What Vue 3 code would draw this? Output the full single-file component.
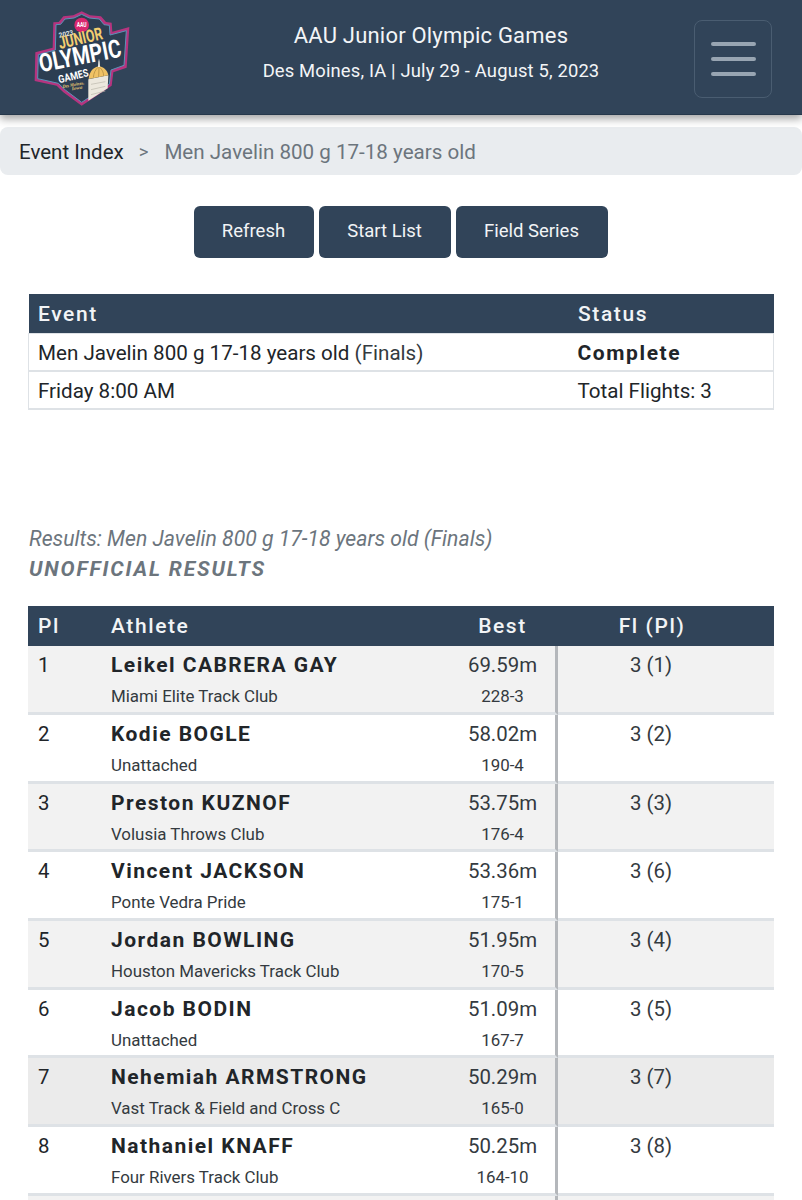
<script setup>
const rows = [
  { pl: 1, name: 'Leikel CABRERA GAY', team: 'Miami Elite Track Club', m: '69.59m', ft: '228-3', fl: '3 (1)' },
  { pl: 2, name: 'Kodie BOGLE', team: 'Unattached', m: '58.02m', ft: '190-4', fl: '3 (2)' },
  { pl: 3, name: 'Preston KUZNOF', team: 'Volusia Throws Club', m: '53.75m', ft: '176-4', fl: '3 (3)' },
  { pl: 4, name: 'Vincent JACKSON', team: 'Ponte Vedra Pride', m: '53.36m', ft: '175-1', fl: '3 (6)' },
  { pl: 5, name: 'Jordan BOWLING', team: 'Houston Mavericks Track Club', m: '51.95m', ft: '170-5', fl: '3 (4)' },
  { pl: 6, name: 'Jacob BODIN', team: 'Unattached', m: '51.09m', ft: '167-7', fl: '3 (5)' },
  { pl: 7, name: 'Nehemiah ARMSTRONG', team: 'Vast Track & Field and Cross C', m: '50.29m', ft: '165-0', fl: '3 (7)', hover: true },
  { pl: 8, name: 'Nathaniel KNAFF', team: 'Four Rivers Track Club', m: '50.25m', ft: '164-10', fl: '3 (8)' },
]
</script>

<template>
  <div class="page">
    <header class="top">
      <svg class="logo" viewBox="0 0 312 306" aria-label="2023 AAU Junior Olympic Games logo">
        <path d="M70 46 L86 45 L100 28 L130 25 L155 13 L180 25 L213 28 L228 45 L245 47 L247 74 L298 60 L290 182 L250 196 L245 236 L155 296 L100 256 L80 236 L14 222 L16 136 L68 122 Z" fill="#b5347f"/>
        <path d="M78 53 L92 52 L105 36 L132 33 L155 22 L178 33 L208 36 L222 53 L238 55 L240 84 L289 71 L282 175 L243 189 L238 231 L155 286 L106 249 L85 229 L23 215 L25 143 L76 129 Z" fill="#2c3e52" stroke="#5a93b8" stroke-width="3"/>
        <circle cx="155" cy="54" r="22" fill="#d9276f"/>
        <text x="155" y="61" text-anchor="middle" class="l-aau" textLength="30" lengthAdjust="spacingAndGlyphs">AAU</text>
        <text x="88" y="92" class="l-yr" transform="rotate(-11 88 92)" textLength="44" lengthAdjust="spacingAndGlyphs">2023</text>
        <text x="90" y="126" class="l-jr" transform="rotate(-13 90 126)" textLength="134" lengthAdjust="spacingAndGlyphs">JUNIOR</text>
        <text x="32" y="196" class="l-ol" transform="rotate(-11 32 196)" textLength="250" lengthAdjust="spacingAndGlyphs">OLYMPIC</text>
        <text x="88" y="229" class="l-ga" transform="rotate(-14 88 229)" textLength="92" lengthAdjust="spacingAndGlyphs">GAMES</text>
        <text x="98" y="243" class="l-dm" transform="rotate(-10 98 243)" textLength="66" lengthAdjust="spacingAndGlyphs">Des Moines,</text>
        <text x="126" y="250" class="l-dm" transform="rotate(-10 126 250)" textLength="32" lengthAdjust="spacingAndGlyphs">Iowa</text>
        <path d="M175 217 L175 281 L233 244 L235 205 Z" fill="#ece8dd"/>
        <path d="M183 232 L226 224 M183 248 L226 238 M183 263 L226 252" stroke="#b9b6ab" stroke-width="2" fill="none"/>
        <path d="M176 216 C178 192 192 180 206 178 C222 180 232 190 235 205 Z" fill="#f0c264"/>
        <path d="M190 212 C191 198 196 188 204 181 M206 210 L207 180 M221 207 C221 196 216 187 209 181" stroke="#a9853e" stroke-width="2" fill="none"/>
        <path d="M204 180 L205 164 L207 155 L209 164 L210 180 Z" fill="#f4f1e8"/>
      </svg>
      <div class="title">
        <div class="t1">AAU Junior Olympic Games</div>
        <div class="t2">Des Moines, IA | July 29 - August 5, 2023</div>
      </div>
      <button class="burger" aria-label="Menu"><span></span><span></span><span></span></button>
    </header>

    <nav class="crumb">
      <span class="c1">Event Index</span>
      <span class="sep">&gt;</span>
      <span class="c2">Men Javelin 800 g 17-18 years old</span>
    </nav>

    <div class="actions">
      <button class="btn b1">Refresh</button>
      <button class="btn b2">Start List</button>
      <button class="btn b3">Field Series</button>
    </div>

    <table class="info">
      <thead>
        <tr><th class="i-a">Event</th><th class="i-b">Status</th></tr>
      </thead>
      <tbody>
        <tr><td>Men Javelin 800 g 17-18 years old <span class="fin">(Finals)</span></td><td class="complete">Complete</td></tr>
        <tr><td>Friday 8:00 AM</td><td>Total Flights: 3</td></tr>
      </tbody>
    </table>

    <div class="res-head">
      <div class="r1">Results: Men Javelin 800 g 17-18 years old (Finals)</div>
      <div class="r2">UNOFFICIAL RESULTS</div>
    </div>

    <table class="results">
      <thead>
        <tr>
          <th class="c-pl">Pl</th>
          <th class="c-ath">Athlete</th>
          <th class="c-best">Best</th>
          <th class="c-fl">Fl (Pl)</th>
        </tr>
      </thead>
      <tbody>
        <tr v-for="(r, i) in rows" :key="r.pl" :class="{ odd: i % 2 === 0, hover: r.hover }">
          <td class="c-pl">{{ r.pl }}</td>
          <td class="c-ath">
            <div class="name">{{ r.name }}</div>
            <div class="sub">{{ r.team }}</div>
          </td>
          <td class="c-best">
            <div class="mark">{{ r.m }}</div>
            <div class="sub">{{ r.ft }}</div>
          </td>
          <td class="c-fl">{{ r.fl }}</td>
        </tr>
        <tr class="odd tail"><td></td><td></td><td class="c-best"></td><td></td></tr>
      </tbody>
    </table>
  </div>
</template>

<style>
html, body { margin: 0; background: #fff; overflow: hidden; }
</style>

<style scoped>
.page {
  width: 802px;
  height: 1200px;
  overflow: hidden;
  font-family: Roboto, "Liberation Sans", sans-serif;
  color: #212529;
  background: #fff;
}
.top {
  height: 115px;
  background: #314459;
  border-bottom: 1px solid #26384b;
  box-sizing: border-box;
  display: flex;
  align-items: center;
  padding: 0 30px 1px 30px;
  box-shadow: 0 4px 8px rgba(0, 0, 0, 0.35);
  position: relative;
}
.logo { flex: none; width: 104px; height: 102px; margin-top: 3px; overflow: visible; }
.l-aau { font: 700 19px Roboto, sans-serif; fill: #fff; }
.l-yr { font: 700 21px Roboto, sans-serif; fill: #dfe5ea; }
.l-jr { font: 700 52px Roboto, sans-serif; fill: #f4cf70; }
.l-ol { font: 700 76px Roboto, sans-serif; fill: #fff; }
.l-ga { font: 700 32px Roboto, sans-serif; fill: #fff; }
.l-dm { font: italic 700 14px "Liberation Serif", serif; fill: #e9c873; }
.title {
  flex: 1;
  text-align: center;
  color: #fff;
  padding-left: 34px;
  margin-top: -8px;
}
.t1 { font-size: 22px; line-height: 30px; letter-spacing: 0.2px; color: #f3f5f7; }
.t2 { font-size: 18.4px; line-height: 26px; margin-top: 7px; letter-spacing: 0.15px; color: #f3f5f7; }
.burger {
  flex: none;
  width: 78px;
  height: 78px;
  margin-top: 4px;
  box-sizing: border-box;
  border: 1px solid #4a5d71;
  border-radius: 8px;
  background: transparent;
  display: flex;
  flex-direction: column;
  justify-content: center;
  align-items: center;
  gap: 11px;
  padding: 0;
}
.burger span { display: block; width: 45px; height: 4px; border-radius: 2px; background: #98a5b2; }
.crumb {
  margin-top: 12px;
  height: 48px;
  box-sizing: border-box;
  background: #e9ecef;
  border-radius: 8px;
  display: flex;
  align-items: center;
  padding: 2px 19px 0;
  font-size: 20.5px;
}
.c1 { color: #212529; }
.sep { color: #6c757d; font-size: 18.5px; margin: 0 16px 0 15px; }
.c2 { color: #6c757d; font-size: 20.6px; }
.actions {
  display: flex;
  gap: 5px;
  margin: 31px 0 0 194px;
}
.btn {
  height: 52px;
  box-sizing: border-box;
  border: none;
  border-radius: 6px;
  background: #314459;
  color: #f2f4f6;
  font: 400 18.5px Roboto, sans-serif;
  padding: 0 1px 2px 0;
}
.b1 { width: 120px; }
.b2 { width: 132px; }
.b3 { width: 152px; }

table { table-layout: fixed; width: 746px; margin-left: 28px; }
th { background: #314459; color: #f2f4f6; text-align: left; font-weight: 500; box-sizing: border-box; }
.info { margin-top: 36px; border-collapse: collapse; }
.info th { height: 39px; padding: 2px 10px 0 9.5px; font-size: 21px; letter-spacing: 1.6px; }
.i-a { width: 540px; }
.info td {
  height: 38px;
  box-sizing: border-box;
  padding: 2px 10px 0 9px;
  font-size: 20.6px;
  border: 1px solid #dee2e6;
  border-bottom-width: 2px;
}
.info td:first-child { border-right: none; }
.info td:last-child { border-left: none; }
.fin { color: #343a40; }
.info td.complete { font-weight: 700; font-size: 21px; letter-spacing: 1.6px; }

.res-head { margin: 115px 0 0 29px; color: #6c757d; font-style: italic; }
.r1 { font-size: 21.2px; line-height: 28px; }
.r2 { font-size: 21px; line-height: 28px; margin-top: 2px; font-weight: 700; letter-spacing: 1.85px; }

.results { margin-top: 23px; border-collapse: separate; border-spacing: 0; }
.results th { height: 40px; padding: 0; font-size: 21px; letter-spacing: 1.6px; }
.results td {
  height: 69px;
  box-sizing: border-box;
  padding: 0;
  vertical-align: top;
  border-bottom: 3px solid #dee2e6;
  font-size: 20.4px;
}
.results tbody tr:nth-child(3n) td { height: 68px; }
.results tbody tr.odd td { background: #f2f2f2; }
.results tbody tr.hover td { background: #ebebeb; }
.results .c-pl { width: 83px; padding-left: 10px; }
.results td.c-pl { padding-top: 7px; line-height: 24px; }
.c-ath { width: 333px; }
.c-best { width: 114px; text-align: center; }
.results th.c-best { text-align: center; padding-left: 6px; padding-right: 3px; }
.results td.c-best { border-right: 3px solid #b4b7bb; padding-left: 6px; }
.c-fl { text-align: center; }
.results th.c-fl { padding-right: 28px; }
.results td.c-fl { padding: 7px 30px 0 0; line-height: 24px; color: #343a40; }
.name {
  font-weight: 700;
  font-size: 21px;
  letter-spacing: 1.47px;
  line-height: 24px;
  padding-top: 7px;
  color: #212529;
}
.mark { line-height: 24px; padding-top: 7px; color: #343a40; }
.sub { font-size: 16.9px; line-height: 20px; margin-top: 9px; color: #343a40; }
.results .tail td { height: 20px; }
</style>
